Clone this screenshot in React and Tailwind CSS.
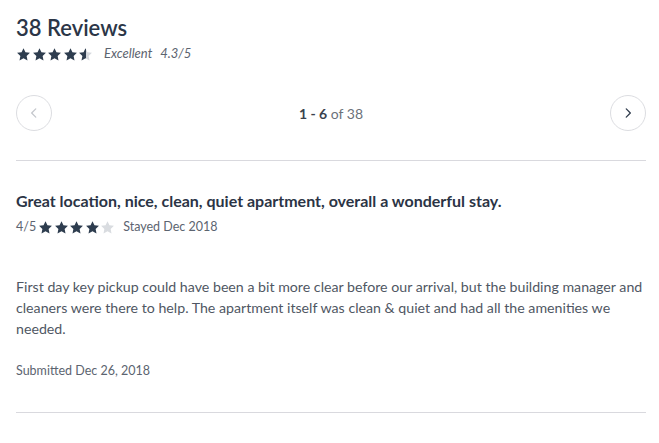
import React from 'react';

const Star = ({ fill = 'full', size = 15 }) => {
  const d = 'M12 1.8l3.1 6.6 7.2.9-5.3 5 1.4 7.1L12 17.9l-6.4 3.5 1.4-7.1-5.3-5 7.2-.9z';
  const id = `half-${size}`;
  return (
    <svg width={size} height={size} viewBox="0 0 24 24" className="shrink-0">
      {fill === 'half' && (
        <defs>
          <linearGradient id={id}>
            <stop offset="55%" stopColor="#2e3d4f" />
            <stop offset="55%" stopColor="#d5d8dd" />
          </linearGradient>
        </defs>
      )}
      <path
        d={d}
        fill={fill === 'full' ? '#2e3d4f' : fill === 'half' ? `url(#${id})` : '#d9dce0'}
      />
    </svg>
  );
};

const Chevron = ({ dir, color }) => (
  <svg width="14" height="14" viewBox="0 0 24 24" fill="none" stroke={color} strokeWidth="2.2" strokeLinecap="round" strokeLinejoin="round">
    {dir === 'left' ? <path d="M15 5l-7 7 7 7" /> : <path d="M9 5l7 7-7 7" />}
  </svg>
);

export default function App() {
  return (
    <div className="w-[659px] h-[443px] bg-white overflow-hidden pl-4 pr-[13px] font-['Lato',sans-serif] text-[#2e3a4b]">
      {/* Header */}
      <h1 className="pt-[14px] text-[22px] leading-[28px] font-semibold text-[#2b3647]">38 Reviews</h1>
      <div className="flex items-center mt-[3px] h-[18px]">
        <div className="flex gap-[0.5px]">
          <Star />
          <Star />
          <Star />
          <Star />
          <Star fill="half" />
        </div>
        <span className="ml-[11px] text-[13px] italic text-[#5c6470]">Excellent</span>
        <span className="ml-[8px] text-[13px] italic text-[#5c6470]">4.3/5</span>
      </div>

      {/* Pagination */}
      <div className="mt-[32px] flex items-center justify-between">
        <button className="w-9 h-9 rounded-full border border-[#dcdde1] flex items-center justify-center">
          <Chevron dir="left" color="#c4c7cc" />
        </button>
        <div className="text-[14px] text-[#6b717a]">
          <span className="font-bold text-[#39414d]">1 - 6</span> of 38
        </div>
        <button className="w-9 h-9 rounded-full border border-[#dcdde1] flex items-center justify-center">
          <Chevron dir="right" color="#2e3a4b" />
        </button>
      </div>

      <div className="mt-[29px] border-t border-[#d9d9de]" />

      {/* Review */}
      <h2 className="mt-[30px] text-[16px] leading-[20px] font-bold text-[#2b3445]">
        Great location, nice, clean, quiet apartment, overall a wonderful stay.
      </h2>
      <div className="flex items-center mt-[7px] h-[18px] text-[12.5px] text-[#5c6470]">
        <span>4/5</span>
        <div className="flex gap-[0.5px] ml-[2px]">
          <Star />
          <Star />
          <Star />
          <Star />
          <Star fill="empty" />
        </div>
        <span className="ml-[8px]">Stayed Dec 2018</span>
      </div>

      <p className="mt-[40px] text-[14.2px] leading-[21px] text-[#4f5763]">
        First day key pickup could have been a bit more clear before our arrival, but the building manager and cleaners were there to help. The apartment itself was clean &amp; quiet and had all the amenities we needed.
      </p>

      <div className="mt-[23px] text-[12.5px] text-[#5c6470]">Submitted Dec 26, 2018</div>

      <div className="mt-[31px] border-t border-[#d9d9de]" />
    </div>
  );
}
